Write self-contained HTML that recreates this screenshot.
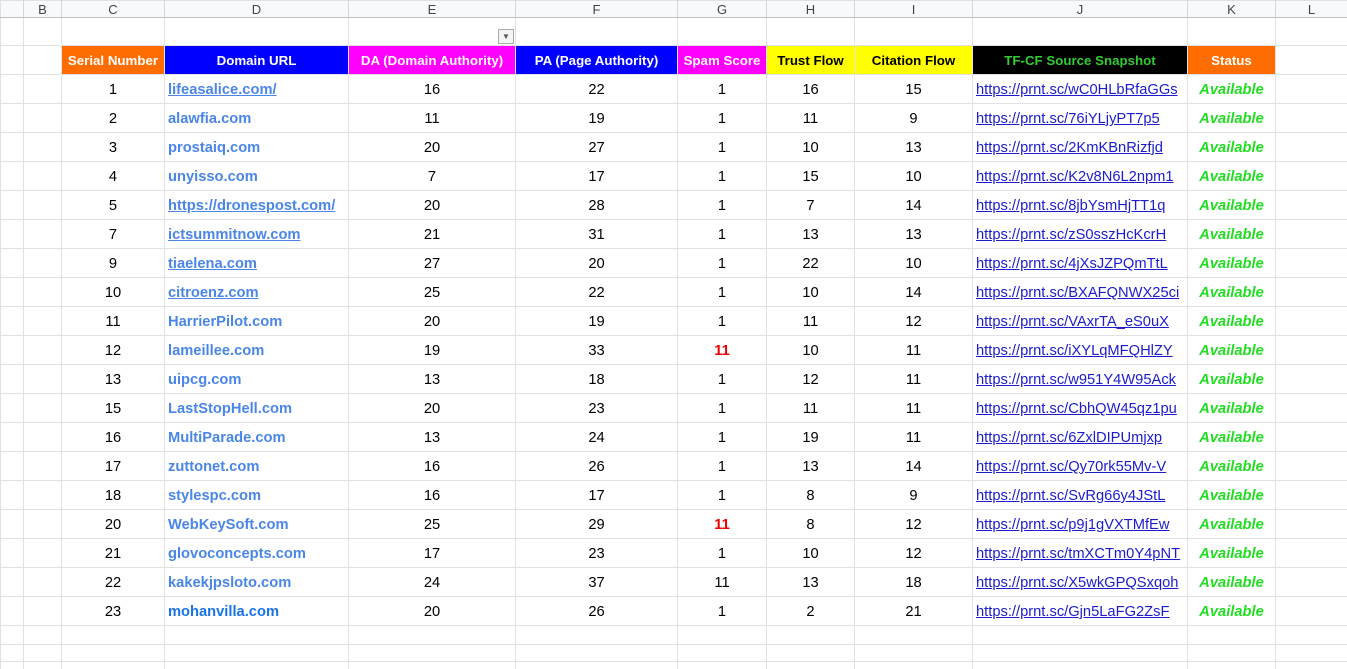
<!DOCTYPE html>
<html><head><meta charset="utf-8"><style>
html,body{margin:0;padding:0;background:#fff;width:1347px;height:669px;overflow:hidden}
table{border-collapse:collapse;table-layout:fixed;width:1347px;font-family:"Liberation Sans",Arial,sans-serif;font-size:14.7px;color:#000}
td{border:1px solid #e1e1e1;padding:2px 0 0 0;height:26px;text-align:center;white-space:nowrap;overflow:hidden}
tr.ch td{padding:0;height:16px;background:#f8f9fa;color:#444;font-size:13px;border-bottom:1px solid #c0c0c0;border-right:1px solid #d6d6d6}
tr.e td{padding:0;height:27px}
tr.h td{padding:0;height:28px;font-weight:bold;font-size:13.3px;color:#fff}
td.l{text-align:left;padding-left:3px}
.d{color:#4a86e8;font-weight:bold}
.u{text-decoration:underline}
.j{text-decoration:underline;color:#1c1ccc}
.a{color:#22dd22;font-weight:bold;font-style:italic}
.r{color:#e00;font-weight:bold}
tr.s1 td{padding:0;height:18px} tr.s2 td{padding:0;height:16px}
</style></head><body>
<table>
<colgroup><col style="width:23px"><col style="width:38px"><col style="width:103px"><col style="width:184px"><col style="width:167px"><col style="width:162px"><col style="width:89px"><col style="width:88px"><col style="width:118px"><col style="width:215px"><col style="width:88px"><col style="width:72px"></colgroup>
<tr class="ch"><td></td><td>B</td><td>C</td><td>D</td><td>E</td><td>F</td><td>G</td><td>H</td><td>I</td><td>J</td><td>K</td><td>L</td></tr>
<tr class="e"><td></td><td></td><td></td><td></td><td style="position:relative"><span style="position:absolute;right:1px;bottom:1px;width:14px;height:13px;border:1px solid #aaa;background:#f4f4f4;font-size:8px;line-height:13px;color:#555">▼</span></td><td></td><td></td><td></td><td></td><td></td><td></td><td></td></tr>
<tr class="h"><td></td><td></td><td style="background:#ff6d01">Serial Number</td><td style="background:#0000ff">Domain URL</td><td style="background:#ff00ff">DA (Domain Authority)</td><td style="background:#0000ff">PA (Page Authority)</td><td style="background:#ff00ff">Spam Score</td><td style="background:#ffff00;color:#000">Trust Flow</td><td style="background:#ffff00;color:#000">Citation Flow</td><td style="background:#000;color:#33cc33">TF-CF Source Snapshot</td><td style="background:#ff6d01">Status</td><td></td></tr>
<tr><td></td><td></td><td>1</td><td class="l d u">lifeasalice.com/</td><td>16</td><td>22</td><td>1</td><td>16</td><td>15</td><td class="l j">https://prnt.sc/wC0HLbRfaGGs</td><td class="a">Available</td><td></td></tr>
<tr><td></td><td></td><td>2</td><td class="l d">alawfia.com</td><td>11</td><td>19</td><td>1</td><td>11</td><td>9</td><td class="l j">https://prnt.sc/76iYLjyPT7p5</td><td class="a">Available</td><td></td></tr>
<tr><td></td><td></td><td>3</td><td class="l d">prostaiq.com</td><td>20</td><td>27</td><td>1</td><td>10</td><td>13</td><td class="l j">https://prnt.sc/2KmKBnRizfjd</td><td class="a">Available</td><td></td></tr>
<tr><td></td><td></td><td>4</td><td class="l d">unyisso.com</td><td>7</td><td>17</td><td>1</td><td>15</td><td>10</td><td class="l j">https://prnt.sc/K2v8N6L2npm1</td><td class="a">Available</td><td></td></tr>
<tr><td></td><td></td><td>5</td><td class="l d u">https://dronespost.com/</td><td>20</td><td>28</td><td>1</td><td>7</td><td>14</td><td class="l j">https://prnt.sc/8jbYsmHjTT1q</td><td class="a">Available</td><td></td></tr>
<tr><td></td><td></td><td>7</td><td class="l d u">ictsummitnow.com</td><td>21</td><td>31</td><td>1</td><td>13</td><td>13</td><td class="l j">https://prnt.sc/zS0sszHcKcrH</td><td class="a">Available</td><td></td></tr>
<tr><td></td><td></td><td>9</td><td class="l d u">tiaelena.com</td><td>27</td><td>20</td><td>1</td><td>22</td><td>10</td><td class="l j">https://prnt.sc/4jXsJZPQmTtL</td><td class="a">Available</td><td></td></tr>
<tr><td></td><td></td><td>10</td><td class="l d u">citroenz.com</td><td>25</td><td>22</td><td>1</td><td>10</td><td>14</td><td class="l j">https://prnt.sc/BXAFQNWX25ci</td><td class="a">Available</td><td></td></tr>
<tr><td></td><td></td><td>11</td><td class="l d">HarrierPilot.com</td><td>20</td><td>19</td><td>1</td><td>11</td><td>12</td><td class="l j">https://prnt.sc/VAxrTA_eS0uX</td><td class="a">Available</td><td></td></tr>
<tr><td></td><td></td><td>12</td><td class="l d">lameillee.com</td><td>19</td><td>33</td><td class="r">11</td><td>10</td><td>11</td><td class="l j">https://prnt.sc/iXYLqMFQHlZY</td><td class="a">Available</td><td></td></tr>
<tr><td></td><td></td><td>13</td><td class="l d">uipcg.com</td><td>13</td><td>18</td><td>1</td><td>12</td><td>11</td><td class="l j">https://prnt.sc/w951Y4W95Ack</td><td class="a">Available</td><td></td></tr>
<tr><td></td><td></td><td>15</td><td class="l d">LastStopHell.com</td><td>20</td><td>23</td><td>1</td><td>11</td><td>11</td><td class="l j">https://prnt.sc/CbhQW45qz1pu</td><td class="a">Available</td><td></td></tr>
<tr><td></td><td></td><td>16</td><td class="l d">MultiParade.com</td><td>13</td><td>24</td><td>1</td><td>19</td><td>11</td><td class="l j">https://prnt.sc/6ZxlDIPUmjxp</td><td class="a">Available</td><td></td></tr>
<tr><td></td><td></td><td>17</td><td class="l d">zuttonet.com</td><td>16</td><td>26</td><td>1</td><td>13</td><td>14</td><td class="l j">https://prnt.sc/Qy70rk55Mv-V</td><td class="a">Available</td><td></td></tr>
<tr><td></td><td></td><td>18</td><td class="l d">stylespc.com</td><td>16</td><td>17</td><td>1</td><td>8</td><td>9</td><td class="l j">https://prnt.sc/SvRg66y4JStL</td><td class="a">Available</td><td></td></tr>
<tr><td></td><td></td><td>20</td><td class="l d">WebKeySoft.com</td><td>25</td><td>29</td><td class="r">11</td><td>8</td><td>12</td><td class="l j">https://prnt.sc/p9j1gVXTMfEw</td><td class="a">Available</td><td></td></tr>
<tr><td></td><td></td><td>21</td><td class="l d">glovoconcepts.com</td><td>17</td><td>23</td><td>1</td><td>10</td><td>12</td><td class="l j">https://prnt.sc/tmXCTm0Y4pNT</td><td class="a">Available</td><td></td></tr>
<tr><td></td><td></td><td>22</td><td class="l d">kakekjpsloto.com</td><td>24</td><td>37</td><td>11</td><td>13</td><td>18</td><td class="l j">https://prnt.sc/X5wkGPQSxqoh</td><td class="a">Available</td><td></td></tr>
<tr><td></td><td></td><td>23</td><td class="l d" style="color:#1a73e8">mohanvilla.com</td><td>20</td><td>26</td><td>1</td><td>2</td><td>21</td><td class="l j">https://prnt.sc/Gjn5LaFG2ZsF</td><td class="a">Available</td><td></td></tr>
<tr class="s1"><td></td><td></td><td></td><td></td><td></td><td></td><td></td><td></td><td></td><td></td><td></td><td></td></tr>
<tr class="s2"><td></td><td></td><td></td><td></td><td></td><td></td><td></td><td></td><td></td><td></td><td></td><td></td></tr>
<tr class="s2"><td></td><td></td><td></td><td></td><td></td><td></td><td></td><td></td><td></td><td></td><td></td><td></td></tr>
</table>
</body></html>
